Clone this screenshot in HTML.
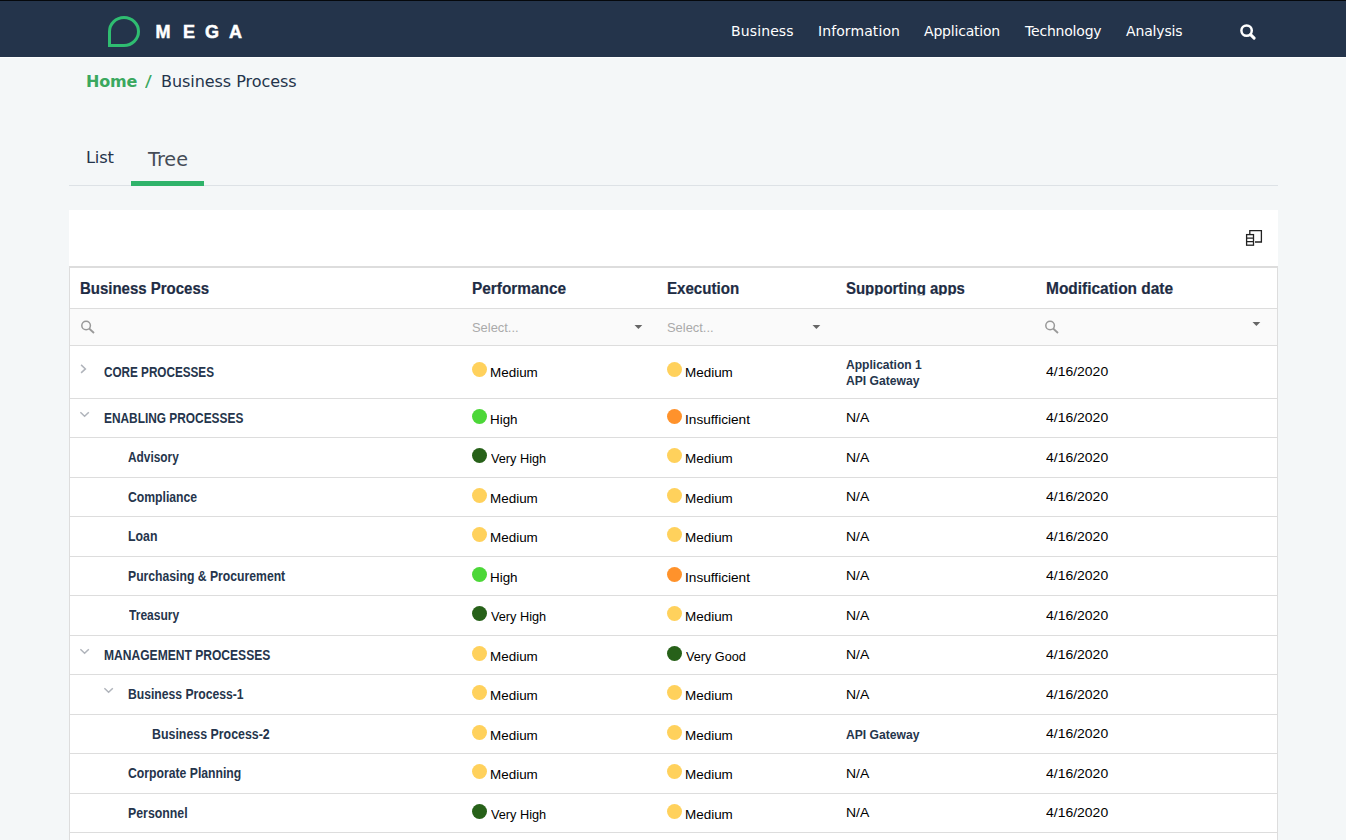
<!DOCTYPE html>
<html lang="en">
<head>
<meta charset="utf-8">
<title>Business Process</title>
<style>
*{box-sizing:border-box;margin:0;padding:0}
html,body{width:1346px;height:840px;overflow:hidden}
body{background:#f4f7f8;font-family:"Liberation Sans",sans-serif;position:relative;color:#24344b}
.abs{position:absolute;white-space:nowrap}
.vd{font-family:"DejaVu Sans","Liberation Sans",sans-serif}
#topbar{position:absolute;left:0;top:0;width:1346px;height:57px;background:#24344b;border-top:1px solid #05080c}
#topline{position:absolute;left:0;top:57px;width:1346px;height:1px;background:#fdfefe}
#nav a{position:absolute;top:22px;color:#fff;font-size:14px;line-height:18px;text-decoration:none;white-space:nowrap}
#crumb{position:absolute;left:86px;top:71px;font-size:16px;line-height:22px;white-space:nowrap}
#crumb b{color:#3aa85f;font-weight:bold}
#crumb i{font-style:normal;color:#3aa85f}
#tabs{position:absolute;left:69px;top:130px;width:1209px;height:56px;border-bottom:1px solid #dde2e6}
#tabbar{position:absolute;left:62px;top:51px;width:73px;height:5px;background:#2fb36a}
#panel{position:absolute;left:69px;top:210px;width:1209px;height:640px;background:#fff}
#grid{position:absolute;left:0;top:56px;width:1209px;border-top:2px solid #dddddd;border-left:1px solid #dddddd;border-right:1px solid #dddddd}
.row{position:relative;border-bottom:1px solid #dddddd;height:39px}
.b{height:40px}
.hd{height:41px}
.fl{height:37px;background:#fafafa}
.r1{height:53px}
.t{position:absolute;white-space:nowrap;transform-origin:0 50%;line-height:16px}
.h{font-weight:bold;font-size:16px;color:#1e2c44;top:13px;-webkit-text-stroke:0.2px #1e2c44}
.n{font-weight:bold;font-size:14px;color:#25354c}
.l{font-size:13px;color:#000}
.d{font-size:13px;color:#000}
.a{font-weight:bold;font-size:13px;color:#25354c}
.s{font-size:13px;color:#aaa;top:11px}
.dot{position:absolute;width:15px;height:15px;border-radius:50%}
.ic{position:absolute;overflow:visible}
</style>
</head>
<body>
<div id="topbar"></div>
<div id="topline"></div>
<svg class="abs" style="left:106px;top:14px" width="36" height="36" viewBox="0 0 36 36"><path d="M3.5 31.5 V17.5 A14.5 14 0 1 1 18 31.5 Z" fill="none" stroke="#2fbd71" stroke-width="3" stroke-linejoin="miter"/></svg>
<svg class="abs" style="left:150px;top:18px" width="100" height="28"><text y="20" x="5.6 33 55 79" font-family="Liberation Sans, sans-serif" font-weight="bold" font-size="18" fill="#ffffff" stroke="#ffffff" stroke-width="0.5">MEGA</text></svg>
<div id="nav" class="vd">
<a style="left:731px;letter-spacing:0.12px">Business</a>
<a style="left:818px;letter-spacing:0.09px">Information</a>
<a style="left:924px;letter-spacing:-0.2px">Application</a>
<a style="left:1025px;letter-spacing:-0.2px">Technology</a>
<a style="left:1126px;letter-spacing:-0.15px">Analysis</a>
</div>
<svg class="abs" style="left:1240px;top:24px" width="16" height="16" viewBox="0 0 16 16"><circle cx="6.6" cy="6.6" r="5.2" fill="none" stroke="#fff" stroke-width="2.5"/><path d="M10.6 10.6 L14.1 14.1" stroke="#fff" stroke-width="3" stroke-linecap="round"/></svg>

<div id="crumb" class="vd"><b style="letter-spacing:-0.2px">Home</b> <i class="abs" style="left:58.5px;top:0;transform:scaleX(1.25);transform-origin:0 0">/</i> <span class="abs" style="left:75px;top:0;letter-spacing:-0.05px">Business Process</span></div>

<div id="tabs" class="vd">
<span class="abs" style="left:17px;top:17px;font-size:16.3px;line-height:22px;letter-spacing:-0.2px;color:#24344b">List</span>
<span class="abs" style="left:79px;top:17px;font-size:19.2px;line-height:26px;color:#454c57">Tree</span>
<div id="tabbar"></div>
</div>

<div id="panel">
<svg class="ic" style="left:1176px;top:19px" width="18" height="18" viewBox="0 0 18 18"><path d="M4.8 5 V1.6 H16.4 V13 H10" fill="none" stroke="#222" stroke-width="1.3"/><rect x="1.6" y="5.6" width="6.9" height="10.6" fill="#fff" stroke="#222" stroke-width="1.3"/><path d="M1.6 9.2 H8.5 M1.6 12.7 H8.5" stroke="#222" stroke-width="1.2"/></svg>
<div id="grid">
<div class="row hd"><span class="t h" style="left:9.95px;transform:scaleX(0.9362)">Business Process</span><span class="t h" style="left:401.9px;transform:scaleX(0.9614)">Performance</span><span class="t h" style="left:596.85px;transform:scaleX(0.9430)">Execution</span><span class="t h" style="left:776.32px;transform:scaleX(0.9353);clip-path:inset(0 0 1.7px 0)">Supporting apps</span><span class="t h" style="left:975.9px;transform:scaleX(0.9663)">Modification date</span></div>
<div class="row fl"><svg class="ic" style="left:11px;top:12px" width="14" height="14" viewBox="0 0 14 14"><circle cx="5.1" cy="4.5" r="4.3" fill="none" stroke="#999" stroke-width="1.5"/><path d="M8.1 7.5 L13 12" stroke="#999" stroke-width="1.8"/></svg><span class="t s" style="left:401.65px;transform:scaleX(0.9918)">Select...</span><svg class="ic" style="left:565px;top:16px" width="8" height="4" viewBox="0 0 8 4"><path d="M-0.5 0 H7.3 L3.4 4 Z" fill="#666"/></svg><span class="t s" style="left:596.65px;transform:scaleX(0.9918)">Select...</span><svg class="ic" style="left:743px;top:16px" width="8" height="4" viewBox="0 0 8 4"><path d="M-0.5 0 H7.3 L3.4 4 Z" fill="#666"/></svg><svg class="ic" style="left:975px;top:12px" width="14" height="14" viewBox="0 0 14 14"><circle cx="5.1" cy="4.5" r="4.3" fill="none" stroke="#999" stroke-width="1.5"/><path d="M8.1 7.5 L13 12" stroke="#999" stroke-width="1.8"/></svg><svg class="ic" style="left:1183px;top:13px" width="8" height="4" viewBox="0 0 8 4"><path d="M-0.5 0 H7.3 L3.4 4 Z" fill="#666"/></svg></div>
<div class="row r1"><svg class="ic" style="left:10px;top:18px" width="8" height="10" viewBox="0 0 8 10"><path d="M1.1 0.9 L5.4 4.9 L1.1 8.9" fill="none" stroke="#b0b4bb" stroke-width="1.5"/></svg><span class="t n" style="left:34.04px;top:18px;transform:scaleX(0.8366)">CORE PROCESSES</span><i class="dot" style="left:402px;top:16px;background:#ffd15c"></i><span class="t l" style="left:420.0px;top:19px;transform:scaleX(1.0342)">Medium</span><i class="dot" style="left:597px;top:16px;background:#ffd15c"></i><span class="t l" style="left:615.0px;top:19px;transform:scaleX(1.0342)">Medium</span><span class="t a" style="left:775.91px;top:11px;transform:scaleX(0.9280)">Application 1</span><span class="t a" style="left:775.91px;top:27px;transform:scaleX(0.9320)">API Gateway</span><span class="t d" style="left:976.4px;top:18px;transform:scaleX(1.0747)">4/16/2020</span></div>
<div class="row"><svg class="ic" style="left:10px;top:12px" width="10" height="6" viewBox="0 0 10 6"><path d="M0.4 1.2 L4.6 5.2 L8.8 1.2" fill="none" stroke="#b0b4bb" stroke-width="1.5"/></svg><span class="t n" style="left:34.39px;top:11px;transform:scaleX(0.8488)">ENABLING PROCESSES</span><i class="dot" style="left:402px;top:10px;background:#4cd738"></i><span class="t l" style="left:420.0px;top:13px;transform:scaleX(1.0315)">High</span><i class="dot" style="left:597px;top:10px;background:#ff922b"></i><span class="t l" style="left:614.74px;top:13px;transform:scaleX(1.0499)">Insufficient</span><span class="t d" style="left:775.52px;top:11px;transform:scaleX(1.0761)">N/A</span><span class="t d" style="left:976.4px;top:11px;transform:scaleX(1.0747)">4/16/2020</span></div>
<div class="row b"><span class="t n" style="left:58.23px;top:11px;transform:scaleX(0.8469)">Advisory</span><i class="dot" style="left:402px;top:10px;background:#276119"></i><span class="t l" style="left:421.0px;top:13px;transform:scaleX(0.9792)">Very High</span><i class="dot" style="left:597px;top:10px;background:#ffd15c"></i><span class="t l" style="left:615.0px;top:13px;transform:scaleX(1.0342)">Medium</span><span class="t d" style="left:775.52px;top:12px;transform:scaleX(1.0761)">N/A</span><span class="t d" style="left:976.4px;top:12px;transform:scaleX(1.0747)">4/16/2020</span></div>
<div class="row"><span class="t n" style="left:57.93px;top:11px;transform:scaleX(0.8712)">Compliance</span><i class="dot" style="left:402px;top:10px;background:#ffd15c"></i><span class="t l" style="left:420.0px;top:13px;transform:scaleX(1.0342)">Medium</span><i class="dot" style="left:597px;top:10px;background:#ffd15c"></i><span class="t l" style="left:615.0px;top:13px;transform:scaleX(1.0342)">Medium</span><span class="t d" style="left:775.52px;top:11px;transform:scaleX(1.0761)">N/A</span><span class="t d" style="left:976.4px;top:11px;transform:scaleX(1.0747)">4/16/2020</span></div>
<div class="row b"><span class="t n" style="left:58.33px;top:11px;transform:scaleX(0.8799)">Loan</span><i class="dot" style="left:402px;top:10px;background:#ffd15c"></i><span class="t l" style="left:420.0px;top:13px;transform:scaleX(1.0342)">Medium</span><i class="dot" style="left:597px;top:10px;background:#ffd15c"></i><span class="t l" style="left:615.0px;top:13px;transform:scaleX(1.0342)">Medium</span><span class="t d" style="left:775.52px;top:12px;transform:scaleX(1.0761)">N/A</span><span class="t d" style="left:976.4px;top:12px;transform:scaleX(1.0747)">4/16/2020</span></div>
<div class="row"><span class="t n" style="left:58.33px;top:11px;transform:scaleX(0.8708)">Purchasing &amp; Procurement</span><i class="dot" style="left:402px;top:10px;background:#4cd738"></i><span class="t l" style="left:420.0px;top:13px;transform:scaleX(1.0315)">High</span><i class="dot" style="left:597px;top:10px;background:#ff922b"></i><span class="t l" style="left:614.74px;top:13px;transform:scaleX(1.0499)">Insufficient</span><span class="t d" style="left:775.52px;top:11px;transform:scaleX(1.0761)">N/A</span><span class="t d" style="left:976.4px;top:11px;transform:scaleX(1.0747)">4/16/2020</span></div>
<div class="row b"><span class="t n" style="left:58.78px;top:11px;transform:scaleX(0.8604)">Treasury</span><i class="dot" style="left:402px;top:10px;background:#276119"></i><span class="t l" style="left:421.0px;top:13px;transform:scaleX(0.9792)">Very High</span><i class="dot" style="left:597px;top:10px;background:#ffd15c"></i><span class="t l" style="left:615.0px;top:13px;transform:scaleX(1.0342)">Medium</span><span class="t d" style="left:775.52px;top:12px;transform:scaleX(1.0761)">N/A</span><span class="t d" style="left:976.4px;top:12px;transform:scaleX(1.0747)">4/16/2020</span></div>
<div class="row"><svg class="ic" style="left:10px;top:12px" width="10" height="6" viewBox="0 0 10 6"><path d="M0.4 1.2 L4.6 5.2 L8.8 1.2" fill="none" stroke="#b0b4bb" stroke-width="1.5"/></svg><span class="t n" style="left:34.33px;top:11px;transform:scaleX(0.8621)">MANAGEMENT PROCESSES</span><i class="dot" style="left:402px;top:10px;background:#ffd15c"></i><span class="t l" style="left:420.0px;top:13px;transform:scaleX(1.0342)">Medium</span><i class="dot" style="left:597px;top:10px;background:#276119"></i><span class="t l" style="left:616.1px;top:13px;transform:scaleX(0.9745)">Very Good</span><span class="t d" style="left:775.52px;top:11px;transform:scaleX(1.0761)">N/A</span><span class="t d" style="left:976.4px;top:11px;transform:scaleX(1.0747)">4/16/2020</span></div>
<div class="row b"><svg class="ic" style="left:34px;top:12px" width="10" height="6" viewBox="0 0 10 6"><path d="M0.4 1.2 L4.6 5.2 L8.8 1.2" fill="none" stroke="#b0b4bb" stroke-width="1.5"/></svg><span class="t n" style="left:58.33px;top:11px;transform:scaleX(0.8690)">Business Process-1</span><i class="dot" style="left:402px;top:10px;background:#ffd15c"></i><span class="t l" style="left:420.0px;top:13px;transform:scaleX(1.0342)">Medium</span><i class="dot" style="left:597px;top:10px;background:#ffd15c"></i><span class="t l" style="left:615.0px;top:13px;transform:scaleX(1.0342)">Medium</span><span class="t d" style="left:775.52px;top:12px;transform:scaleX(1.0761)">N/A</span><span class="t d" style="left:976.4px;top:12px;transform:scaleX(1.0747)">4/16/2020</span></div>
<div class="row"><span class="t n" style="left:82.25px;top:11px;transform:scaleX(0.8848)">Business Process-2</span><i class="dot" style="left:402px;top:10px;background:#ffd15c"></i><span class="t l" style="left:420.0px;top:13px;transform:scaleX(1.0342)">Medium</span><i class="dot" style="left:597px;top:10px;background:#ffd15c"></i><span class="t l" style="left:615.0px;top:13px;transform:scaleX(1.0342)">Medium</span><span class="t a" style="left:775.91px;top:12px;transform:scaleX(0.9320)">API Gateway</span><span class="t d" style="left:976.4px;top:11px;transform:scaleX(1.0747)">4/16/2020</span></div>
<div class="row b"><span class="t n" style="left:57.88px;top:11px;transform:scaleX(0.8721)">Corporate Planning</span><i class="dot" style="left:402px;top:10px;background:#ffd15c"></i><span class="t l" style="left:420.0px;top:13px;transform:scaleX(1.0342)">Medium</span><i class="dot" style="left:597px;top:10px;background:#ffd15c"></i><span class="t l" style="left:615.0px;top:13px;transform:scaleX(1.0342)">Medium</span><span class="t d" style="left:775.52px;top:12px;transform:scaleX(1.0761)">N/A</span><span class="t d" style="left:976.4px;top:12px;transform:scaleX(1.0747)">4/16/2020</span></div>
<div class="row"><span class="t n" style="left:58.33px;top:11px;transform:scaleX(0.8809)">Personnel</span><i class="dot" style="left:402px;top:10px;background:#276119"></i><span class="t l" style="left:421.0px;top:13px;transform:scaleX(0.9792)">Very High</span><i class="dot" style="left:597px;top:10px;background:#ffd15c"></i><span class="t l" style="left:615.0px;top:13px;transform:scaleX(1.0342)">Medium</span><span class="t d" style="left:775.52px;top:11px;transform:scaleX(1.0761)">N/A</span><span class="t d" style="left:976.4px;top:11px;transform:scaleX(1.0747)">4/16/2020</span></div>
<div class="row b"></div>
</div>
</div>
</body>
</html>
